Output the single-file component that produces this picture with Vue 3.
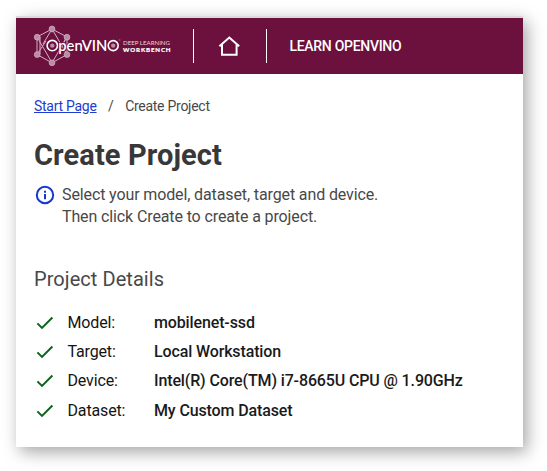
<script setup>
const details = [
  { label: 'Model:', value: 'mobilenet-ssd', key: 'model' },
  { label: 'Target:', value: 'Local Workstation', key: 'target' },
  { label: 'Device:', value: 'Intel(R) Core(TM) i7-8665U CPU @ 1.90GHz', key: 'device' },
  { label: 'Dataset:', value: 'My Custom Dataset', key: 'dataset' },
]
const nodes = [[20, 5], [5.2, 13.2], [35, 13.2], [5.2, 30.6], [35, 30.6], [20, 38.8]]
</script>

<template>
  <div class="page">
    <main class="card">
      <header class="bar">
        <svg class="logo" width="140" height="44" viewBox="0 0 140 44">
          <g class="mesh">
            <path d="M20 5 5 13V30.5L20 38.8 35 30.5V13ZM20 5 11 20M20 5 35 30.5M5 13 15 30 20 38.8M5 30.5 14 17M35 13 28 24M20 38.8 35 13M8 13V30" />
            <circle v-for="(n, i) in nodes" :key="i" :cx="n[0]" :cy="n[1]" r="2.9" />
          </g>
          <circle class="cut" cx="20.3" cy="21.6" r="6.6" />
          <circle class="pupil" cx="20.3" cy="21.6" r="2.2" />
          <circle class="ring" cx="20.3" cy="21.6" r="5.2" />
          <text class="word" x="26.3" y="26.9" textLength="49" lengthAdjust="spacingAndGlyphs">penVIN</text>
          <circle class="pupil" cx="81.2" cy="21.6" r="2.2" />
          <circle class="ring" cx="81.2" cy="21.6" r="5" />
          <path class="tm" d="M86.8 16h1.6" />
          <text class="deep" x="91" y="20.7" textLength="47" lengthAdjust="spacingAndGlyphs">DEEP LEARNING</text>
          <text class="bench" x="91" y="27.6" textLength="47.5">WORKBENCH</text>
        </svg>
        <span class="rule"></span>
        <svg class="home" width="24" height="24" viewBox="0 0 24 24">
          <path d="M2.4 12.3 12.3 3.6 22.2 12.3M5 10.6V20.7H19.6V10.6" />
        </svg>
        <span class="rule"></span>
        <a class="learn">LEARN OPENVINO</a>
      </header>
      <section class="content">
        <nav class="crumbs">
          <a class="start">Start Page</a><span class="slash">/</span><span class="current">Create Project</span>
        </nav>
        <h1>Create Project</h1>
        <div class="tip">
          <svg width="20" height="20" viewBox="0 0 20 20">
            <circle cx="10" cy="10" r="8.2" />
            <path d="M10 5.8v2M10 9v5.2" />
          </svg>
          <p>Select your model, dataset, target and device.<br>Then click Create to create a project.</p>
        </div>
        <h2>Project Details</h2>
        <ul>
          <li v-for="d in details" :key="d.key">
            <svg width="18" height="14" viewBox="0 0 18 14"><path d="M1.4 7.4 6 11.9 16.4 1.5" /></svg>
            <span class="label">{{ d.label }}</span>
            <span class="value">{{ d.value }}</span>
          </li>
        </ul>
      </section>
    </main>
  </div>
</template>

<style>
body { background: #fff; overflow: hidden; }
</style>

<style scoped>
.page { box-sizing: border-box; width: 547px; height: 471px; padding: 16px; font-family: Roboto, "Liberation Sans", sans-serif; white-space: nowrap; }
.card { box-sizing: border-box; width: 507px; height: 431px; background: #fff; border-top: 2px solid #dcdadd; box-shadow: 4px 5px 16px rgba(0, 0, 0, .36); }
.bar { box-sizing: border-box; height: 56px; background: #6c103e; display: flex; align-items: center; padding-left: 16px; }
.logo { flex: none; }
.mesh path { fill: none; stroke: #d3b2c3; stroke-width: 1; }
.mesh circle { fill: #bb8ca5; stroke: #d3b2c3; stroke-width: .7; }
.cut { fill: #6c103e; }
.ring { fill: none; stroke: #fff; stroke-width: 1.6; }
.pupil { fill: #bb8ca5; }
.word { font: 600 14.4px Lato, sans-serif; fill: #fff; stroke: #6c103e; stroke-width: 1.5; paint-order: stroke; }
.tm { stroke: #bb8ca5; stroke-width: .8; }
.deep { font: 400 6.3px Lato, sans-serif; fill: #e8d6df; }
.bench { font: 900 6.1px Lato, sans-serif; fill: #fff; stroke: #fff; stroke-width: .2; }
.rule { width: 1px; height: 34px; background: #fff; margin-left: 21px; }
.home { margin-left: 23px; }
.home path { fill: none; stroke: #fff; stroke-width: 2; }
.home + .rule { margin-left: 25px; }
.learn { margin-left: 22.5px; color: #fff; font-size: 14px; font-weight: 500; line-height: 20px; letter-spacing: -.3px; }
.content { padding: 23px 18px 0; }
.crumbs { display: flex; height: 18px; font-size: 14px; line-height: 18px; color: #484848; letter-spacing: -.27px; }
.start { color: #1d3ccf; text-decoration: underline; }
.slash { margin: 0 11.5px; }
h1 { margin: 22px 0 0; font-size: 29px; font-weight: 700; line-height: 36px; color: #383838; letter-spacing: .1px; }
.tip { display: flex; margin-top: 10px; padding-left: 1px; }
.tip svg { margin-top: 2px; }
.tip circle, .tip path { fill: none; stroke: #1737ce; stroke-width: 2; }
.tip p { margin: 1px 0 0 7px; font-size: 16px; line-height: 22px; color: #484848; letter-spacing: -.12px; }
h2 { margin: 38px 0 0; font-size: 20px; font-weight: 400; line-height: 26px; color: #484848; letter-spacing: .06px; }
ul { list-style: none; margin: 16px 0 0; padding: 0; }
li { display: flex; align-items: center; height: 29.3px; font-size: 16px; line-height: 22px; color: #141414; }
li svg { margin-left: 2px; }
li path { fill: none; stroke: #0b641d; stroke-width: 2; }
.label { width: 86.5px; margin-left: 13.5px; letter-spacing: -.15px; }
.value { font-weight: 500; color: #1a1a1a; letter-spacing: -.13px; }
</style>
